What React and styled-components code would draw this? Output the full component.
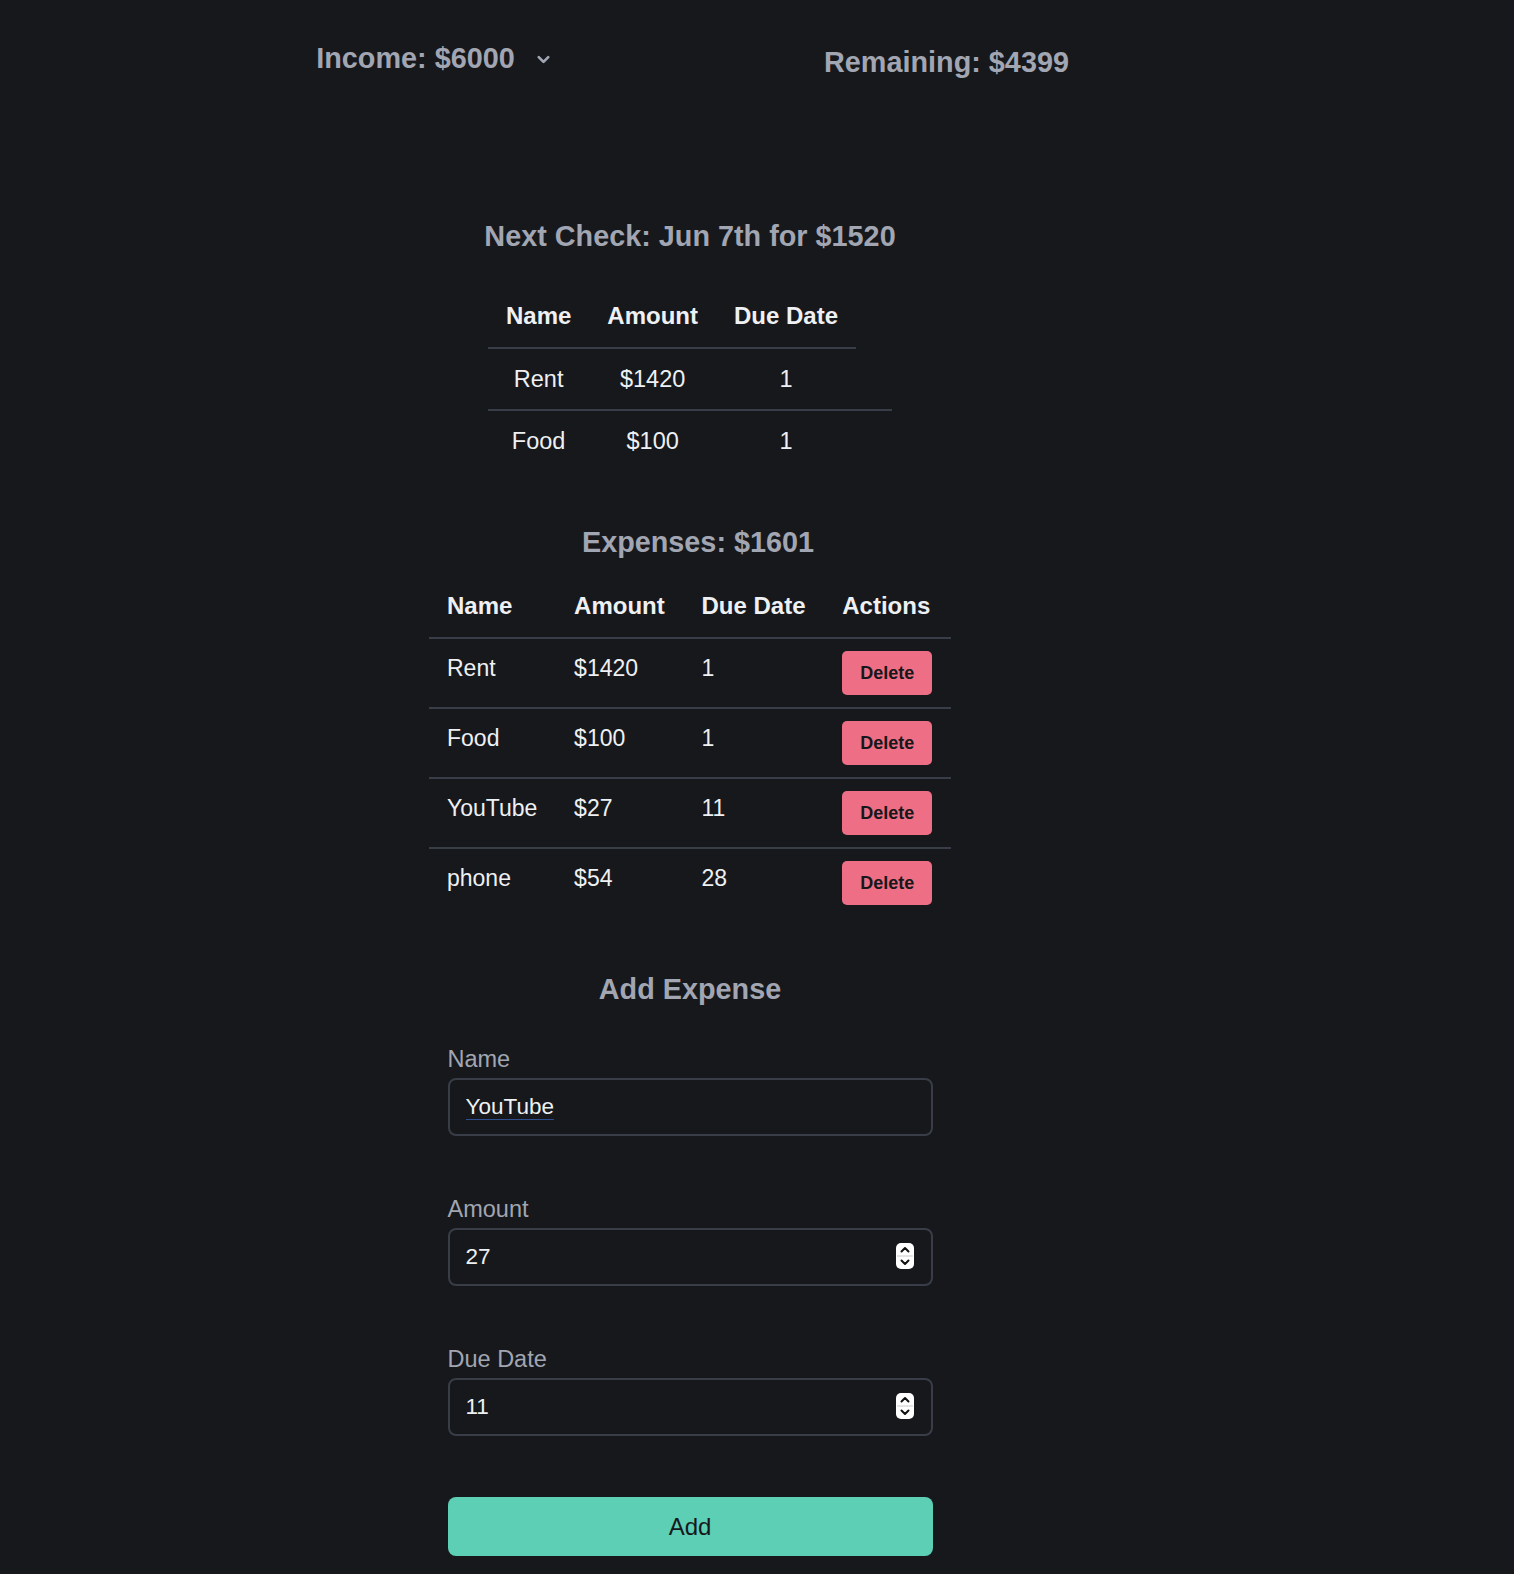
import React from 'react'
import { styled, createGlobalStyle } from 'styled-components'

const GlobalStyle = createGlobalStyle`
  body {
    margin: 0;
    background: #17181c;
    font-family: "Liberation Sans", Arial, Helvetica, sans-serif;
  }
`

const checkRows = [
  { name: 'Rent', amount: '$1420', due: '1' },
  { name: 'Food', amount: '$100', due: '1' },
]

const expenses = [
  { name: 'Rent', amount: '$1420', due: '1' },
  { name: 'Food', amount: '$100', due: '1' },
  { name: 'YouTube', amount: '$27', due: '11' },
  { name: 'phone', amount: '$54', due: '28' },
]

const Chevron = () => (
  <svg width="19" height="19" viewBox="0 0 24 24" fill="none" stroke="#a1a6b2" strokeWidth="3.4" strokeLinecap="round" strokeLinejoin="round">
    <path d="M6 9l6 6 6-6" />
  </svg>
)

const Spinner = () => (
  <SpinIcon width="18" height="26" viewBox="0 0 18 26">
    <rect x="0" y="0" width="18" height="26" rx="5" fill="#ffffff" />
    <line x1="1" y1="13" x2="17" y2="13" stroke="#c9c9cc" strokeWidth="1" />
    <path d="M5.5 8.5 L9 5 L12.5 8.5" fill="none" stroke="#111" strokeWidth="2" strokeLinecap="round" strokeLinejoin="round" />
    <path d="M5.5 17.5 L9 21 L12.5 17.5" fill="none" stroke="#111" strokeWidth="2" strokeLinecap="round" strokeLinejoin="round" />
  </SpinIcon>
)

const App = () => {
  return (
    <>
      <GlobalStyle />
      <Page>
        <Header>
          <IncomeButton>
            <span>Income: $6000</span>
            <Chevron />
          </IncomeButton>
          <Remaining>Remaining: $4399</Remaining>
        </Header>

        <Section $top={140}>
          <Heading>Next Check: Jun 7th for $1520</Heading>
          <CheckTable>
            <thead>
              <tr>
                <Th $align="center">Name</Th>
                <Th $align="center">Amount</Th>
                <Th $align="center">Due Date</Th>
              </tr>
            </thead>
            <tbody>
              {checkRows.map((r) => (
                <tr key={r.name}>
                  <CheckTd>{r.name}</CheckTd>
                  <CheckTd>{r.amount}</CheckTd>
                  <CheckTd>{r.due}</CheckTd>
                  <CheckTd />
                </tr>
              ))}
            </tbody>
          </CheckTable>
        </Section>

        <Section $top={54}>
          <Heading $shift={16}>Expenses: $1601</Heading>
          <ExpenseTable>
            <thead>
              <tr>
                <Th>Name</Th>
                <Th>Amount</Th>
                <Th>Due Date</Th>
                <Th>Actions</Th>
              </tr>
            </thead>
            <tbody>
              {expenses.map((r) => (
                <tr key={r.name}>
                  <Td>{r.name}</Td>
                  <Td>{r.amount}</Td>
                  <Td>{r.due}</Td>
                  <Td>
                    <DeleteButton>Delete</DeleteButton>
                  </Td>
                </tr>
              ))}
            </tbody>
          </ExpenseTable>
        </Section>

        <Form onSubmit={(e) => e.preventDefault()}>
          <Heading>Add Expense</Heading>
          <Field $first>
            <Label>Name</Label>
            <InputWrap>
              <Input defaultValue="YouTube" $underline />
            </InputWrap>
          </Field>
          <Field>
            <Label>Amount</Label>
            <InputWrap>
              <Input defaultValue="27" />
              <Spinner />
            </InputWrap>
          </Field>
          <Field>
            <Label>Due Date</Label>
            <InputWrap>
              <Input defaultValue="11" />
              <Spinner />
            </InputWrap>
          </Field>
          <AddButton type="submit">Add</AddButton>
        </Form>
      </Page>
    </>
  )
}

const Page = styled('div')`
  width: 1380px;
  display: flex;
  flex-direction: column;
  align-items: center;
  padding-bottom: 40px;
`

const Header = styled('div')`
  display: grid;
  grid-template-columns: 513px 513px;
  align-items: start;
  padding-top: 41px;
`

const IncomeButton = styled('div')`
  display: flex;
  align-items: center;
  justify-content: center;
  gap: 19px;
  font-size: 28.8px;
  line-height: 34px;
  font-weight: 700;
  color: #a1a6b2;
  padding-left: 2px;

  svg {
    margin-top: 2px;
  }
`

const Remaining = styled('h2')`
  margin: 4px 0 0;
  text-align: center;
  font-size: 28.8px;
  line-height: 34px;
  font-weight: 700;
  color: #a1a6b2;
`

const Section = styled('section')`
  display: flex;
  flex-direction: column;
  align-items: center;
  margin-top: ${(p) => p.$top}px;
`

const Heading = styled('h2')`
  margin: 0;
  padding-left: ${(p) => p.$shift || 0}px;
  font-size: 28.8px;
  line-height: 34px;
  font-weight: 700;
  color: #a1a6b2;
  text-align: center;
`

const CheckTable = styled('table')`
  border-collapse: collapse;
  margin-top: 33px;
`

const ExpenseTable = styled('table')`
  border-collapse: collapse;
  margin-top: 17px;
  width: 522px;
`

const Th = styled('th')`
  padding: 16px 18px 17px;
  font-size: 24px;
  line-height: 28px;
  font-weight: 700;
  color: #eef0f3;
  text-align: ${(p) => p.$align || 'left'};
  border-bottom: 2px solid #383d47;
  white-space: nowrap;
`

const CheckTd = styled('td')`
  padding: 16px 18px;
  font-size: 23.5px;
  line-height: 28px;
  color: #eef0f3;
  text-align: center;
  border-bottom: 2px solid #383d47;

  tr:last-child > & {
    border-bottom: none;
  }
`

const Td = styled('td')`
  padding: 12px 18px;
  font-size: 23px;
  line-height: 34px;
  color: #eef0f3;
  vertical-align: top;
  border-bottom: 2px solid #383d47;
  white-space: nowrap;

  tr:last-child > & {
    border-bottom: none;
  }
`

const DeleteButton = styled('button')`
  display: block;
  width: 90px;
  height: 44px;
  border: none;
  border-radius: 5px;
  background: #ee6f85;
  color: #16171b;
  font-family: inherit;
  font-size: 18px;
  font-weight: 700;
  cursor: pointer;
`

const Form = styled('form')`
  width: 485px;
  display: flex;
  flex-direction: column;
  margin-top: 55px;
`

const Field = styled('div')`
  display: flex;
  flex-direction: column;
  margin-top: ${(p) => (p.$first ? 36 : 56)}px;
`

const Label = styled('label')`
  font-size: 23.5px;
  line-height: 34px;
  color: #a1a6b2;
  margin-bottom: 2px;
`

const InputWrap = styled('div')`
  position: relative;
`

const Input = styled('input')`
  box-sizing: border-box;
  width: 100%;
  height: 58px;
  padding: 0 16px;
  border: 2px solid #383d47;
  border-radius: 8px;
  background: transparent;
  color: #eef0f3;
  font-family: inherit;
  font-size: 22.5px;
  outline: none;
  text-decoration: ${(p) => (p.$underline ? 'underline' : 'none')};
  text-decoration-color: #2e4f92;
  text-decoration-thickness: 3px;
  text-underline-offset: 5px;
`

const SpinIcon = styled('svg')`
  position: absolute;
  right: 19px;
  top: 15px;
`

const AddButton = styled('button')`
  margin-top: 61px;
  height: 59px;
  border: none;
  border-radius: 8px;
  background: #5dcfb4;
  color: #17181c;
  font-family: inherit;
  font-size: 24px;
  cursor: pointer;
`

export default App
